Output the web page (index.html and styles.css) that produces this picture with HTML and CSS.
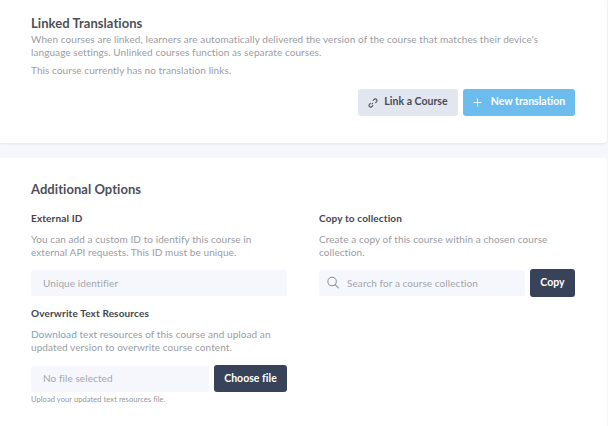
FILE: index.html
```html
<!DOCTYPE html>
<html lang="en">
<head>
<meta charset="utf-8">
<title>Course options</title>
<link rel="stylesheet" href="styles.css">
</head>
<body>
<section class="card card-top">
  <h2 class="heading">Linked Translations</h2>
  <p class="text intro">When courses are linked, learners are automatically delivered the version of the course that matches their device's language settings. Unlinked courses function as separate courses.</p>
  <p class="text status">This course currently has no translation links.</p>
  <div class="actions">
    <button class="btn btn-grey"><svg class="link-icon" viewBox="0 0 12 12" fill="none" stroke="currentColor" stroke-width="1.300" stroke-linecap="round"><path d="M6.200 2.800 7.300 1.700a1.900 1.900 0 0 1 2.900 0 1.900 1.900 0 0 1 .1 2.700L9.200 5.500"/><path d="M5.800 9.200 4.700 10.300a1.900 1.900 0 0 1-2.900 0 1.900 1.900 0 0 1-.1-2.700L2.800 6.500"/><path d="M4.900 7.100 5.600 6.400"/></svg><span class="btn-label">Link a Course</span></button>
    <button class="btn btn-blue"><svg class="plus-icon" viewBox="0 0 10 10" fill="none" stroke="currentColor" stroke-width="1"><path d="M5 .5v9M.5 5h9"/></svg><span class="btn-label">New translation</span></button>
  </div>
</section>
<section class="card card-bottom">
  <h2 class="heading">Additional Options</h2>
  <div class="columns">
    <div class="col">
      <h3 class="label">External ID</h3>
      <p class="text">You can add a custom ID to identify this course in external API requests. This ID must be unique.</p>
      <div class="field field-wide">Unique identifier</div>
      <h3 class="label label-second">Overwrite Text Resources</h3>
      <p class="text"><a class="link" href="#">Download</a> text resources of this course and upload an updated version to overwrite course content.</p>
      <div class="row row-file">
        <div class="field field-grow">No file selected</div>
        <button class="btn btn-dark btn-file"><span class="btn-label">Choose file</span></button>
      </div>
      <p class="hint">Upload your updated text resources file.</p>
    </div>
    <div class="col">
      <h3 class="label">Copy to collection</h3>
      <p class="text">Create a copy of this course within a chosen course collection.</p>
      <div class="row row-copy">
        <div class="field field-grow field-search"><svg class="search-icon" viewBox="0 0 13 13" fill="none" stroke="currentColor" stroke-width="1.100" stroke-linecap="round"><circle cx="5.500" cy="5.500" r="4.600"/><path d="M9 9l3.300 3.300"/></svg>Search for a course collection</div>
        <button class="btn btn-dark btn-copy"><span class="btn-label">Copy</span></button>
      </div>
    </div>
  </div>
</section>
</body>
</html>
```
FILE: styles.css
```css
* { box-sizing: border-box; }
html, body { margin: 0; padding: 0; }
body {
  width: 608px;
  height: 426px;
  overflow: hidden;
  background: #f5f7fb;
  font-family: "Lato", "Noto Sans", sans-serif;
  color: #9a9ca3;
}
.card {
  width: 607px;
  background: #fff;
}
.card-top {
  height: 143px;
  padding: 15px 32px 0 31px;
  box-shadow: 0 1px 3px rgba(40, 50, 80, 0.08);
  border-radius: 0 0 3px 0;
  margin-bottom: 15px;
}
.card-bottom {
  height: 268px;
  padding: 23px 32px 0 31px;
  border-radius: 0 3px 0 0;
}
.heading {
  margin: 0;
  font-size: 13px;
  line-height: 16px;
  font-weight: 700;
  color: #4d4f58;
  letter-spacing: 0.05px;
}
.text {
  margin: 0;
  font-size: 10px;
  line-height: 13px;
  letter-spacing: 0.08px;
  color: #9a9ca3;
}
.intro { margin-top: 2px; }
.status { margin-top: 5px; }
.actions {
  display: flex;
  justify-content: flex-end;
  gap: 5px;
  margin-top: 12px;
}
.btn {
  display: flex;
  align-items: center;
  justify-content: center;
  border: 0;
  border-radius: 3px;
  font-family: inherit;
  font-size: 10.500px;
  font-weight: 700;
  letter-spacing: 0.02px;
  padding: 0;
}
.btn-label { margin-top: -3px; }
.btn-grey {
  width: 100px;
  height: 27px;
  background: #e2e6ee;
  color: #494c58;
}
.btn-blue {
  width: 112px;
  height: 27px;
  background: #6cbdee;
  color: #fff;
}
.link-icon { width: 10px; height: 10px; margin-right: 6px; }
.plus-icon { width: 9px; height: 9px; margin-right: 9px; }
.columns {
  display: grid;
  grid-template-columns: 256px 256px;
  gap: 32px;
  margin-top: 15px;
}
.label {
  margin: 0 0 8px;
  font-size: 10px;
  line-height: 13px;
  font-weight: 700;
  color: #43454e;
  letter-spacing: 0.15px;
}
.label-second { margin-top: 11px; }
.field {
  display: flex;
  align-items: center;
  height: 26px;
  margin-top: 11px;
  padding: 0 0 1px 12px;
  background: #f5f7fc;
  font-size: 10px;
  letter-spacing: 0.08px;
  color: #a3a5ac;
  border-radius: 2px;
}
.field-wide { width: 256px; }
.row {
  display: flex;
  align-items: center;
  gap: 5px;
}
.row-file { margin-top: 11px; }
.row-copy { margin-top: 10px; }
.row .field { margin-top: 0; }
.field-grow { flex: 1; }
.field-search { padding-left: 8px; }
.search-icon { width: 12px; height: 13px; margin-right: 8px; color: #8c8e95; }
.btn-dark { background: #384259; color: #fff; height: 27px; }
.btn-dark .btn-label { margin-top: -2px; }
.btn-file { width: 73px; }
.btn-copy { width: 45px; height: 28px; }
.hint {
  margin: 3px 0 0;
  font-size: 7.500px;
  line-height: 10px;
  letter-spacing: 0.08px;
  color: #94969d;
}
.link { color: #6aa9c9; text-decoration: none; }
```
